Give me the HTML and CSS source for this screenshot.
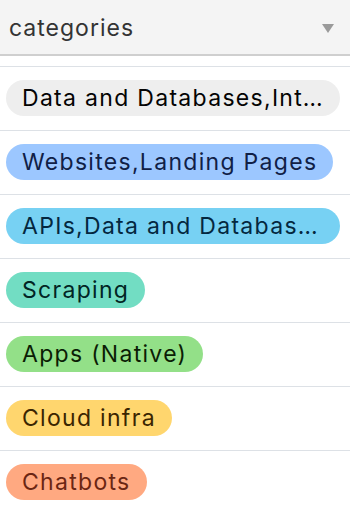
FILE: index.html
```html
<!DOCTYPE html>
<html lang="en">
<head>
    <meta charset="UTF-8">
    <meta name="viewport" content="width=device-width, initial-scale=1.0">
    <title>categories</title>
    <link rel="stylesheet" href="styles.css">
</head>
<body>

    <!-- Field header -->
    <div class="field-header">
        <span class="field-name">categories</span>
        <span class="caret"></span>
    </div>

    <!-- Cell values, one per record -->
    <ul class="cells">
        <li class="cell"><span class="pill gray">Data and Databases,Integrations,Automation</span></li>
        <li class="cell"><span class="pill blue">Websites,Landing Pages</span></li>
        <li class="cell"><span class="pill cyan">APIs,Data and Databases,Integrations</span></li>
        <li class="cell"><span class="pill teal">Scraping</span></li>
        <li class="cell"><span class="pill green">Apps (Native)</span></li>
        <li class="cell"><span class="pill yellow">Cloud infra</span></li>
        <li class="cell"><span class="pill orange">Chatbots</span></li>
    </ul>

</body>
</html>
```

FILE: styles.css
```css
* {
    margin: 0;
    padding: 0;
    box-sizing: border-box;
}

body {
    font-family: 'Inter', 'Noto Sans', sans-serif;
    background-color: #fff;
    overflow: hidden;
}

.field-header {
    height: 56px;
    background-color: #f4f4f4;
    border-bottom: 2px solid #cfcfcf;
    display: flex;
    align-items: center;
    justify-content: space-between;
    padding: 0 16px 0 9px;
}

.field-name {
    font-size: 23px;
    letter-spacing: 1px;
    color: #333;
    margin-top: 2px;
}

/* small dropdown triangle */
.caret {
    width: 0;
    height: 0;
    border-left: 6px solid transparent;
    border-right: 6px solid transparent;
    border-top: 9px solid #9a9a9a;
    margin-top: 2px;
}

.cells {
    list-style: none;
    margin-top: 10px;
    border-top: 1px solid #dde1e6;
}

.cell {
    padding: 13px 10px 14px 6px;
    border-bottom: 1px solid #dde1e6;
}

.pill {
    display: block;
    width: fit-content;
    max-width: 100%;
    height: 36px;
    line-height: 36px;
    padding: 0 16px;
    border-radius: 18px;
    font-size: 23px;
    letter-spacing: 1.3px;
    white-space: nowrap;
    overflow: hidden;
    text-overflow: ellipsis;
}

.gray { background-color: #eeeeee; color: #040404; }
.blue { background-color: #9cc7ff; color: #102046; }
.cyan { background-color: #77d1f3; color: #04283f; }
.teal { background-color: #72ddc3; color: #012524; }
.green { background-color: #93e088; color: #0b1d05; }
.yellow { background-color: #ffd66e; color: #3b2501; }
.orange { background-color: #ffa981; color: #6b2613; }
```
